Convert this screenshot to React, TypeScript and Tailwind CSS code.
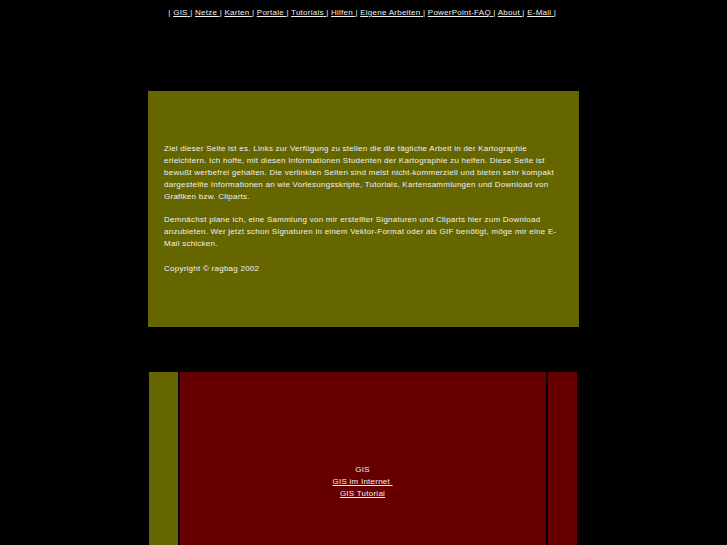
import React from "react";

const navItems = ["GIS", "Netze", "Karten", "Portale", "Tutorials", "Hilfen", "Eigene Arbeiten", "PowerPoint-FAQ", "About", "E-Mail"];

export default function App() {
  return (
    <div className="min-h-[545px] bg-black text-[#f0f0f0] font-['Liberation_Sans',Arial,sans-serif] text-[8px] leading-[12px] tracking-[0.25px]">
      <div className="flex justify-center pt-[7px] h-[91px] whitespace-pre">
        <span>
          |{" "}
          {navItems.map((n) => (
            <React.Fragment key={n}>
              <a className="underline text-[#f0f0f0]">{n} </a>|{" "}
            </React.Fragment>
          ))}
        </span>
      </div>
      <div className="flex justify-center">
        <div className="w-[431px] h-[236px] bg-[#666600] flex items-center pl-[16px]">
          <div className="whitespace-nowrap">
            <div>Ziel dieser Seite ist es. Links zur Verfügung zu stellen die die tägliche Arbeit in der Kartographie</div>
            <div>erleichtern. Ich hoffe, mit diesen Informationen Studenten der Kartographie zu helfen. Diese Seite ist</div>
            <div>bewußt werbefrei gehalten. Die verlinkten Seiten sind meist nicht-kommerziell und bieten sehr kompakt</div>
            <div>dargestellte Informationen an wie Vorlesungsskripte, Tutorials, Kartensammlungen und Download von</div>
            <div>Grafiken bzw. Cliparts.</div>
            <div className="h-[11px]" />
            <div>Demnächst plane ich, eine Sammlung von mir erstellter Signaturen und Cliparts hier zum Download</div>
            <div>anzubieten. Wer jetzt schon Signaturen in einem Vektor-Format oder als GIF benötigt, möge mir eine E-</div>
            <div>Mail schicken.</div>
            <div className="h-[13px]" />
            <div>Copyright © ragbag 2002</div>
          </div>
        </div>
      </div>
      <div className="flex justify-center pt-[45px]">
        <div className="flex gap-[2px] w-[428px] h-[220px] ml-[-2px]">
          <div className="w-[29px] bg-[#666600]" />
          <div className="flex-1 bg-[#660000] flex flex-col items-center justify-center pb-[1px]">
            <div>GIS</div>
            <a className="underline whitespace-pre text-[#f0f0f0]">GIS im Internet </a>
            <a className="underline text-[#f0f0f0]">GIS Tutorial</a>
          </div>
          <div className="w-[29px] bg-[#660000]" />
        </div>
      </div>
    </div>
  );
}
